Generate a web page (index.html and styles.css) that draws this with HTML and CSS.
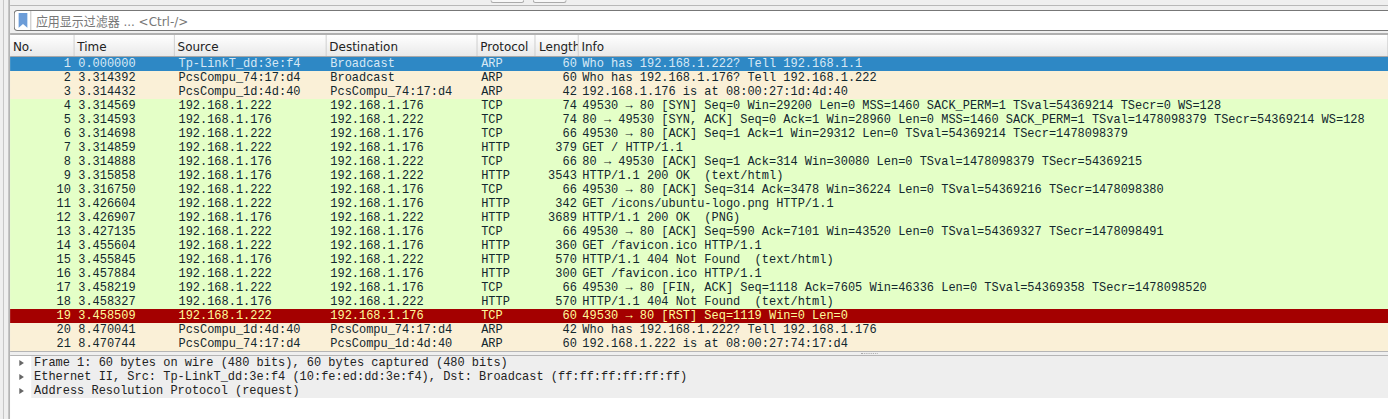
FILE: index.html
```html
<!DOCTYPE html>
<html lang="zh">
<head>
<meta charset="utf-8">
<title>Wireshark</title>
<link rel="stylesheet" href="styles.css">
</head>
<body>
<div class="viewport">
<div class="stage">
  <div class="sidebar"></div>
  <main class="main">
    <div class="toolbar">
      <span class="tool-btn"></span>
      <span class="tool-btn"></span>
    </div>
    <div class="filter">
      <span class="bookmark">
        <svg width="10" height="15" viewBox="0 0 10 15"><path d="M0 0h10v15L5 11 0 15z" fill="#6b9cd8"/></svg>
      </span>
      <span class="filter-text">应用显示过滤器 ... &lt;Ctrl-/&gt;</span>
    </div>
    <div class="table">
      <div class="row head"><span class="no">No.</span><span class="time">Time</span><span class="src">Source</span><span class="dst">Destination</span><span class="proto">Protocol</span><span class="len">Length</span><span class="info">Info</span></div>
      <div class="row sel"><span class="no">1</span><span class="time">0.000000</span><span class="src">Tp-LinkT_dd:3e:f4</span><span class="dst">Broadcast</span><span class="proto">ARP</span><span class="len">60</span><span class="info">Who has 192.168.1.222? Tell 192.168.1.1</span></div>
      <div class="row arp"><span class="no">2</span><span class="time">3.314392</span><span class="src">PcsCompu_74:17:d4</span><span class="dst">Broadcast</span><span class="proto">ARP</span><span class="len">60</span><span class="info">Who has 192.168.1.176? Tell 192.168.1.222</span></div>
      <div class="row arp"><span class="no">3</span><span class="time">3.314432</span><span class="src">PcsCompu_1d:4d:40</span><span class="dst">PcsCompu_74:17:d4</span><span class="proto">ARP</span><span class="len">42</span><span class="info">192.168.1.176 is at 08:00:27:1d:4d:40</span></div>
      <div class="row tcp"><span class="no">4</span><span class="time">3.314569</span><span class="src">192.168.1.222</span><span class="dst">192.168.1.176</span><span class="proto">TCP</span><span class="len">74</span><span class="info">49530 → 80 [SYN] Seq=0 Win=29200 Len=0 MSS=1460 SACK_PERM=1 TSval=54369214 TSecr=0 WS=128</span></div>
      <div class="row tcp"><span class="no">5</span><span class="time">3.314593</span><span class="src">192.168.1.176</span><span class="dst">192.168.1.222</span><span class="proto">TCP</span><span class="len">74</span><span class="info">80 → 49530 [SYN, ACK] Seq=0 Ack=1 Win=28960 Len=0 MSS=1460 SACK_PERM=1 TSval=1478098379 TSecr=54369214 WS=128</span></div>
      <div class="row tcp"><span class="no">6</span><span class="time">3.314698</span><span class="src">192.168.1.222</span><span class="dst">192.168.1.176</span><span class="proto">TCP</span><span class="len">66</span><span class="info">49530 → 80 [ACK] Seq=1 Ack=1 Win=29312 Len=0 TSval=54369214 TSecr=1478098379</span></div>
      <div class="row tcp"><span class="no">7</span><span class="time">3.314859</span><span class="src">192.168.1.222</span><span class="dst">192.168.1.176</span><span class="proto">HTTP</span><span class="len">379</span><span class="info">GET / HTTP/1.1</span></div>
      <div class="row tcp"><span class="no">8</span><span class="time">3.314888</span><span class="src">192.168.1.176</span><span class="dst">192.168.1.222</span><span class="proto">TCP</span><span class="len">66</span><span class="info">80 → 49530 [ACK] Seq=1 Ack=314 Win=30080 Len=0 TSval=1478098379 TSecr=54369215</span></div>
      <div class="row tcp"><span class="no">9</span><span class="time">3.315858</span><span class="src">192.168.1.176</span><span class="dst">192.168.1.222</span><span class="proto">HTTP</span><span class="len">3543</span><span class="info">HTTP/1.1 200 OK  (text/html)</span></div>
      <div class="row tcp"><span class="no">10</span><span class="time">3.316750</span><span class="src">192.168.1.222</span><span class="dst">192.168.1.176</span><span class="proto">TCP</span><span class="len">66</span><span class="info">49530 → 80 [ACK] Seq=314 Ack=3478 Win=36224 Len=0 TSval=54369216 TSecr=1478098380</span></div>
      <div class="row tcp"><span class="no">11</span><span class="time">3.426604</span><span class="src">192.168.1.222</span><span class="dst">192.168.1.176</span><span class="proto">HTTP</span><span class="len">342</span><span class="info">GET /icons/ubuntu-logo.png HTTP/1.1</span></div>
      <div class="row tcp"><span class="no">12</span><span class="time">3.426907</span><span class="src">192.168.1.176</span><span class="dst">192.168.1.222</span><span class="proto">HTTP</span><span class="len">3689</span><span class="info">HTTP/1.1 200 OK  (PNG)</span></div>
      <div class="row tcp"><span class="no">13</span><span class="time">3.427135</span><span class="src">192.168.1.222</span><span class="dst">192.168.1.176</span><span class="proto">TCP</span><span class="len">66</span><span class="info">49530 → 80 [ACK] Seq=590 Ack=7101 Win=43520 Len=0 TSval=54369327 TSecr=1478098491</span></div>
      <div class="row tcp"><span class="no">14</span><span class="time">3.455604</span><span class="src">192.168.1.222</span><span class="dst">192.168.1.176</span><span class="proto">HTTP</span><span class="len">360</span><span class="info">GET /favicon.ico HTTP/1.1</span></div>
      <div class="row tcp"><span class="no">15</span><span class="time">3.455845</span><span class="src">192.168.1.176</span><span class="dst">192.168.1.222</span><span class="proto">HTTP</span><span class="len">570</span><span class="info">HTTP/1.1 404 Not Found  (text/html)</span></div>
      <div class="row tcp"><span class="no">16</span><span class="time">3.457884</span><span class="src">192.168.1.222</span><span class="dst">192.168.1.176</span><span class="proto">HTTP</span><span class="len">300</span><span class="info">GET /favicon.ico HTTP/1.1</span></div>
      <div class="row tcp"><span class="no">17</span><span class="time">3.458219</span><span class="src">192.168.1.222</span><span class="dst">192.168.1.176</span><span class="proto">TCP</span><span class="len">66</span><span class="info">49530 → 80 [FIN, ACK] Seq=1118 Ack=7605 Win=46336 Len=0 TSval=54369358 TSecr=1478098520</span></div>
      <div class="row tcp"><span class="no">18</span><span class="time">3.458327</span><span class="src">192.168.1.176</span><span class="dst">192.168.1.222</span><span class="proto">HTTP</span><span class="len">570</span><span class="info">HTTP/1.1 404 Not Found  (text/html)</span></div>
      <div class="row rst"><span class="no">19</span><span class="time">3.458509</span><span class="src">192.168.1.222</span><span class="dst">192.168.1.176</span><span class="proto">TCP</span><span class="len">60</span><span class="info">49530 → 80 [RST] Seq=1119 Win=0 Len=0</span></div>
      <div class="row arp"><span class="no">20</span><span class="time">8.470041</span><span class="src">PcsCompu_1d:4d:40</span><span class="dst">PcsCompu_74:17:d4</span><span class="proto">ARP</span><span class="len">42</span><span class="info">Who has 192.168.1.222? Tell 192.168.1.176</span></div>
      <div class="row arp"><span class="no">21</span><span class="time">8.470744</span><span class="src">PcsCompu_74:17:d4</span><span class="dst">PcsCompu_1d:4d:40</span><span class="proto">ARP</span><span class="len">60</span><span class="info">192.168.1.222 is at 08:00:27:74:17:d4</span></div>
    </div>
    <div class="splitter"><span class="grip"></span></div>
    <div class="details">
      <div class="detail"><span class="arrow"></span><span class="detail-text">Frame 1: 60 bytes on wire (480 bits), 60 bytes captured (480 bits)</span></div>
      <div class="detail"><span class="arrow"></span><span class="detail-text">Ethernet II, Src: Tp-LinkT_dd:3e:f4 (10:fe:ed:dd:3e:f4), Dst: Broadcast (ff:ff:ff:ff:ff:ff)</span></div>
      <div class="detail"><span class="arrow"></span><span class="detail-text">Address Resolution Protocol (request)</span></div>
    </div>
  </main>
</div>
</div>
</body>
</html>
```
FILE: styles.css
```css
html, body { margin: 0; padding: 0; background: #fff; overflow: hidden; height: 419px; }
.viewport { width: 1388px; height: 419px; overflow: hidden; }
.stage {
  width: 1508.6px; height: 419px; display: flex; overflow: hidden;
  transform: scaleX(0.92); transform-origin: 0 0;
  font-family: "Liberation Mono", monospace; font-size: 13px; color: #222;
}
.sidebar {
  width: 11px; flex: none; box-sizing: border-box; background: #efefef;
  border-left: 3px solid #efefef; border-right: 2px solid #b4b4b4;
  box-shadow: inset 1px 0 0 #b4b4b4;
}
.main { flex: 1; min-width: 0; display: flex; flex-direction: column; background: #efefef; }
.toolbar { height: 5px; border-bottom: 1px solid #b8b8b8; display: flex; gap: 9px; padding-left: 522px; }
.tool-btn { width: 35px; height: 2px; background: #f7f7f7; border: 1px solid #aaa; border-top: 0; border-radius: 0 0 3px 3px; }
.filter { height: 19px; margin: 4px 0 0 4px; background: #fff; border: 1px solid #777; border-right: 0; border-radius: 4px 0 0 4px; display: flex; align-items: center; }
.bookmark { width: 18px; height: 19px; box-sizing: border-box; border-right: 1px solid #bbb; display: flex; align-items: center; justify-content: center; flex: none; }
.filter-text { padding-left: 5px; font-family: "DejaVu Sans", "Noto Sans CJK SC", sans-serif; font-size: 13px; color: #777; }
.table { margin-top: 2px; border-top: 2px solid #b0b0b0; }
.row { display: flex; height: 14px; line-height: 14px; white-space: pre; }
.row span { padding-left: 4px; box-sizing: border-box; flex: none; overflow: hidden; }
.row .no { width: 70px; text-align: right; padding: 0 4px 0 0; }
.row .time { width: 109px; }
.row .src { width: 165px; }
.row .dst { width: 164px; }
.row .proto { width: 63px; }
.row .len { width: 47px; text-align: right; padding: 0 2px 0 0; }
.row .info { flex: 1 1 0; min-width: 0; }
.row.head { height: 22px; line-height: 23px; background: linear-gradient(#fff, #e9e9e9); border-bottom: 1px solid #a8a8a8; font-family: "DejaVu Sans", sans-serif; font-size: 13px; box-sizing: border-box; color: #222; }
.row.head span { border-right: 1px solid #ccc; text-align: left; padding: 0 0 0 3px; }
.row.head .len { padding-left: 4px; }
.sel { background: #2e88c5; color: #d8e9f5; }
.arp { background: #faf0d7; color: #12272e; }
.tcp { background: #e4ffc7; color: #12272e; }
.rst { background: #a40000; color: #fffc9c; }
.splitter { height: 5px; box-sizing: border-box; border-top: 1px solid #b5b5b5; border-bottom: 1px solid #b5b5b5; padding: 1px 0 0 925px; }
.grip { display: block; width: 18px; border-top: 1px dotted #aaa; }
.details { flex: 1; background: #fff; }
.detail { height: 14px; line-height: 13px; display: flex; white-space: pre; }
.arrow { width: 0; height: 0; margin: 4px 8px 0 10px; border-left: 5px solid #666; border-top: 3px solid transparent; border-bottom: 3px solid transparent; flex: none; }
.detail-text { flex: 1; background: #eee; color: #222; padding-left: 3px; }
```
